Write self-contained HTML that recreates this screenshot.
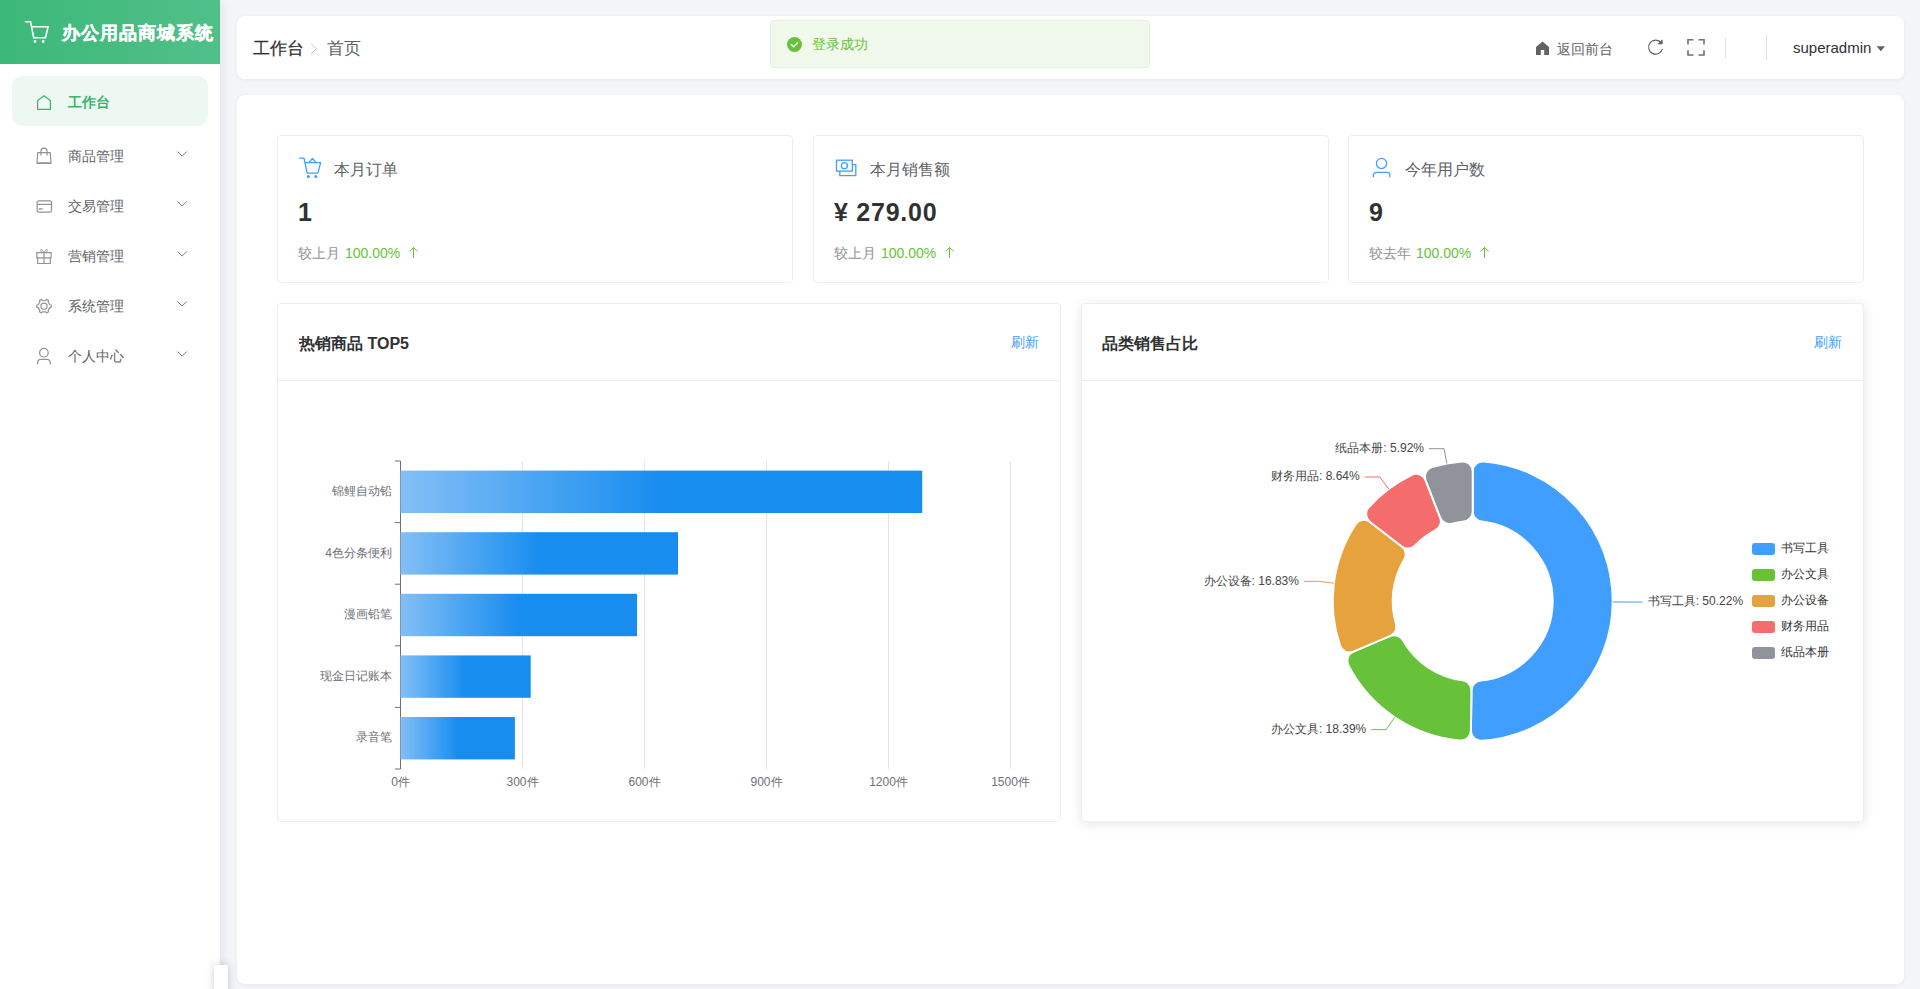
<!DOCTYPE html>
<html><head><meta charset="utf-8">
<style>
*{box-sizing:border-box;margin:0;padding:0}
html,body{width:1920px;height:989px;overflow:hidden}
body{font-family:"Liberation Sans",sans-serif;background:#f4f5f9;position:relative;color:#303133}
.abs{position:absolute}
#side{left:0;top:0;width:220px;height:989px;background:#fff;box-shadow:2px 0 10px rgba(0,21,41,0.08);z-index:2}
#logo{left:0;top:0;width:220px;height:64px;background:linear-gradient(90deg,#3cb878,#50c08a)}
#logo .t{left:62px;top:21px;font-size:18px;font-weight:bold;-webkit-text-stroke:0.35px #fff;color:#fff;letter-spacing:1px;white-space:nowrap;line-height:24px}
.mi{left:12px;width:196px;height:50px;border-radius:10px}
.mi.act{background:#eef8f3}
.mi .lbl{position:absolute;left:56px;top:1px;line-height:50px;font-size:14px;color:#606266;white-space:nowrap}
.mi.act .lbl{color:#3cb371;font-weight:bold}
.mi svg{position:absolute}
.chev{position:absolute;left:165px;top:21px}
.card{background:#fff;border-radius:8px;box-shadow:0 1px 4px rgba(0,0,0,0.05)}
.txt{white-space:nowrap;position:absolute}
.sc{position:absolute;top:135px;width:516px;height:148px;border:1px solid #ebeef5;border-radius:4px;background:#fff}
.sc .ttl{left:56px;top:23px;font-size:16px;line-height:22px;color:#606266}
.sc .val{left:20px;top:61px;font-size:25px;line-height:30px;font-weight:bold;color:#303133;letter-spacing:0.75px}
.sc .cmp{left:20px;top:108px;font-size:14px;line-height:18px;color:#909399}
.sc .pct{left:67px;top:108px;font-size:14px;line-height:18px;color:#67c23a}
.sc .arr{left:130px;top:110px}
.sc svg{position:absolute}
.cc{position:absolute;top:303px;width:784px;height:519px;border:1px solid #ebeef5;border-radius:4px;background:#fff}
.cc .hd{position:absolute;left:0;top:0;width:100%;height:77px;border-bottom:1px solid #ebeef5}
.cc .ttl{left:21px;top:29px;font-size:16px;line-height:22px;font-weight:bold;color:#303133}
.cc .rf{right:21px;top:29px;font-size:14px;line-height:18px;color:#409eff}
svg text{font-family:"Liberation Sans",sans-serif}
.bl{font-size:12px;fill:#6e7079}
.pl{font-size:12px;fill:#464646}
.lg{font-size:12px;fill:#333}
</style></head><body>
<div id="side" class="abs">
  <div id="logo" class="abs">
    <svg class="abs" style="left:22px;top:16px" width="30" height="30" viewBox="0 0 30 30" fill="none" stroke="#fff" stroke-width="1.6" stroke-linejoin="miter" stroke-linecap="round">
      <path d="M3.5 5.8H8.6L11.7 21.8H23.5L26.1 10.8H10"/>
      <circle cx="13" cy="25.5" r="1.4" fill="#fff" stroke="none"/>
      <circle cx="21.2" cy="25.5" r="1.4" fill="#fff" stroke="none"/>
    </svg>
    <div class="abs t">办公用品商城系统</div>
  </div>
  <div class="abs mi act" style="top:76px">
    <svg style="left:25px;top:19px" width="14" height="15" viewBox="0 0 14 15" fill="none" stroke="#3cb371" stroke-width="1.2"><path d="M0.6 14.4V5.6L7 0.8l6.4 4.8v8.8z"/></svg>
    <div class="lbl">工作台</div>
  </div>
  <div class="abs mi" style="top:130px">
    <svg style="left:24px;top:17px" width="16" height="17" viewBox="0 0 16 17" fill="none" stroke="#909399" stroke-width="1.2" stroke-linejoin="round"><path d="M1.7 5.7H14.3L15 16.2H1z"/><path d="M1 16.2H15" stroke-width="1.6"/><path d="M4.9 8.6V4.2a3.05 3.05 0 0 1 6.1 0V8.6"/></svg>
    <div class="lbl">商品管理</div>
    <svg class="chev" width="11" height="7" viewBox="0 0 11 7" fill="none" stroke="#6b6e75" stroke-width="0.9"><path d="M0.5 0.5l4.6 4.6 4.6-4.6"/></svg>
  </div>
  <div class="abs mi" style="top:180px">
    <svg style="left:24px;top:19px" width="17" height="15" viewBox="0 0 17 15" fill="none" stroke="#909399" stroke-width="1.2"><rect x="1.1" y="1.8" width="14.4" height="11.4" rx="1.8"/><path d="M1.1 5.4h14.4"/><path d="M2.6 9.9h4" stroke-width="1.4"/></svg>
    <div class="lbl">交易管理</div>
    <svg class="chev" width="11" height="7" viewBox="0 0 11 7" fill="none" stroke="#6b6e75" stroke-width="0.9"><path d="M0.5 0.5l4.6 4.6 4.6-4.6"/></svg>
  </div>
  <div class="abs mi" style="top:230px">
    <svg style="left:24px;top:17px" width="16" height="17" viewBox="0 0 16 17" fill="none" stroke="#909399" stroke-width="1.2"><path d="M0.9 5.6H15.1V10.8H0.9Z"/><path d="M1.7 10.8V16.6H14.3V10.8M8 5.6V16.6"/><path d="M8 5.6C6.5 3 4.7 1.4 4.7 3.3 4.7 4.7 6 5.6 8 5.6 10 5.6 11.3 4.7 11.3 3.3 11.3 1.4 9.5 3 8 5.6" stroke-width="1"/></svg>
    <div class="lbl">营销管理</div>
    <svg class="chev" width="11" height="7" viewBox="0 0 11 7" fill="none" stroke="#6b6e75" stroke-width="0.9"><path d="M0.5 0.5l4.6 4.6 4.6-4.6"/></svg>
  </div>
  <div class="abs mi" style="top:280px">
    <svg style="left:24px;top:17px" width="17" height="18" viewBox="0 0 17 18" fill="none" stroke="#909399" stroke-width="1.2" stroke-linejoin="round"><g transform="translate(-0.5 0)"><path d="M10.13 3.48 L11.12 2.33 L13.09 3.48 L12.60 4.91 L14.22 7.72 L15.71 8.01 L15.71 10.29 L14.22 10.58 L12.60 13.39 L13.09 14.82 L11.12 15.97 L10.13 14.82 L6.87 14.82 L5.88 15.97 L3.91 14.82 L4.40 13.39 L2.78 10.58 L1.29 10.29 L1.29 8.01 L2.78 7.72 L4.40 4.91 L3.91 3.48 L5.88 2.33 L6.87 3.48Z"/><circle cx="8.5" cy="9.15" r="3.1"/></g></svg>
    <div class="lbl">系统管理</div>
    <svg class="chev" width="11" height="7" viewBox="0 0 11 7" fill="none" stroke="#6b6e75" stroke-width="0.9"><path d="M0.5 0.5l4.6 4.6 4.6-4.6"/></svg>
  </div>
  <div class="abs mi" style="top:330px">
    <svg style="left:24px;top:17px" width="16" height="18" viewBox="0 0 16 18" fill="none" stroke="#909399" stroke-width="1.2"><circle cx="7.9" cy="5.7" r="4.3"/><path d="M1.6 17.2V15.4a3 3 0 0 1 3-3H11.2a3 3 0 0 1 3 3V17.2"/></svg>
    <div class="lbl">个人中心</div>
    <svg class="chev" width="11" height="7" viewBox="0 0 11 7" fill="none" stroke="#6b6e75" stroke-width="0.9"><path d="M0.5 0.5l4.6 4.6 4.6-4.6"/></svg>
  </div>
  <div class="abs" style="left:214px;top:965px;width:14px;height:30px;background:#fff;box-shadow:0 0 8px rgba(0,0,0,0.2)"></div>
</div>

<div id="hdr" class="abs card" style="left:237px;top:16px;width:1667px;height:63px">
  <div class="txt" style="left:16px;top:21px;font-size:17px;line-height:24px;color:#303133;-webkit-text-stroke:0.25px #303133">工作台</div>
  <svg class="abs" style="left:73px;top:27px" width="8" height="12" viewBox="0 0 8 12" fill="none" stroke="#c0c4cc" stroke-width="1"><path d="M1.2 0.6l5 5.2-5 5.2"/></svg>
  <div class="txt" style="left:90px;top:21px;font-size:17px;line-height:24px;color:#606266">首页</div>

  <div class="abs" style="left:533px;top:4px;width:380px;height:48px;background:#f0f9eb;border:1px solid #e1f3d8;border-radius:4px">
    <svg class="abs" style="left:16px;top:16px" width="15" height="15" viewBox="0 0 15 15"><circle cx="7.5" cy="7.5" r="7.5" fill="#67c23a"/><path d="M4.4 7.6l2.2 2.1 4-4" fill="none" stroke="#fff" stroke-width="1.5" stroke-linecap="round" stroke-linejoin="round"/></svg>
    <div class="txt" style="left:41px;top:14px;font-size:14px;line-height:18px;color:#67c23a">登录成功</div>
  </div>

  <svg class="abs" style="left:1298px;top:25px" width="15" height="14" viewBox="0 0 15 14"><path d="M7.5 0.5L14 6v8H9.2V9H5.8v5H1V6z" fill="#606266"/></svg>
  <div class="txt" style="left:1320px;top:24px;font-size:14px;line-height:18px;color:#606266">返回前台</div>
  <svg class="abs" style="left:1410px;top:22px" width="18" height="18" viewBox="0 0 18 18" fill="none" stroke="#606266" stroke-width="1.2"><path d="M15.4 10.8A7 7 0 1 1 14.2 4.9"/><path d="M15.2 1.9V5.9H11.3z" fill="#606266" stroke-width="0.8" stroke-linejoin="miter"/></svg>
  <svg class="abs" style="left:1450px;top:22px" width="18" height="18" viewBox="0 0 18 18" fill="none" stroke="#707275" stroke-width="1.6"><path d="M1 6.6V1.8h5.5M11.5 1.8H17v4.8M17 12.2v4.8h-5.5M6.5 17H1v-4.8"/></svg>
  <div class="abs" style="left:1488px;top:22px;width:1px;height:20px;background:#dcdfe6"></div>
  <div class="abs" style="left:1529px;top:19px;width:1px;height:25px;background:#dcdfe6"></div>
  <div class="txt" style="left:1556px;top:23px;font-size:15px;line-height:18px;color:#303133">superadmin</div>
  <svg class="abs" style="left:1639px;top:30px" width="10" height="7" viewBox="0 0 10 7"><path d="M0.6 0.2h8.4L4.8 5.2z" fill="#606266"/></svg>
</div>

<div id="main" class="abs card" style="left:237px;top:95px;width:1667px;height:889px"></div>

<div class="sc" style="left:277px">
  <svg style="left:20px;top:20px" width="26" height="24" viewBox="0 0 26 24" fill="none" stroke="#409eff" stroke-width="1.3" stroke-linejoin="round" stroke-linecap="round"><path d="M1.6 2.1H6L9.2 17.2H20L22.6 6.6H6.9"/><path d="M10.8 6.6L14.5 2.5L18 6.6"/><circle cx="10.4" cy="20.5" r="0.9" fill="#409eff"/><circle cx="17.8" cy="20.5" r="0.9" fill="#409eff"/></svg>
  <div class="txt ttl">本月订单</div>
  <div class="txt val">1</div>
  <div class="txt cmp">较上月</div><div class="txt pct">100.00%</div><svg class="abs arr" width="11" height="13" viewBox="0 0 11 13" fill="none" stroke="#67c23a" stroke-width="1"><path d="M5.5 12V1.4M1.4 5.5L5.5 1.4l4.1 4.1"/></svg>
</div>
<div class="sc" style="left:813px">
  <svg style="left:20px;top:22px" width="24" height="22" viewBox="0 0 24 22" fill="none" stroke="#409eff" stroke-width="1.3"><rect x="2.5" y="2.2" width="15.8" height="10.9"/><circle cx="10.4" cy="7.7" r="3"/><path d="M18.3 6.7H21.8V17.7H5.8V13.1"/></svg>
  <div class="txt ttl">本月销售额</div>
  <div class="txt val">¥ 279.00</div>
  <div class="txt cmp">较上月</div><div class="txt pct">100.00%</div><svg class="abs arr" width="11" height="13" viewBox="0 0 11 13" fill="none" stroke="#67c23a" stroke-width="1"><path d="M5.5 12V1.4M1.4 5.5L5.5 1.4l4.1 4.1"/></svg>
</div>
<div class="sc" style="left:1348px">
  <svg style="left:20px;top:20px" width="24" height="24" viewBox="0 0 24 24" fill="none" stroke="#409eff" stroke-width="1.3"><circle cx="12.5" cy="7.45" r="5.1"/><path d="M4.3 21.3V19.4a3 3 0 0 1 3-3H17.8a3 3 0 0 1 3 3v1.9"/></svg>
  <div class="txt ttl">今年用户数</div>
  <div class="txt val">9</div>
  <div class="txt cmp">较去年</div><div class="txt pct">100.00%</div><svg class="abs arr" width="11" height="13" viewBox="0 0 11 13" fill="none" stroke="#67c23a" stroke-width="1"><path d="M5.5 12V1.4M1.4 5.5L5.5 1.4l4.1 4.1"/></svg>
</div>

<div class="cc" style="left:277px">
  <div class="hd"><div class="txt ttl">热销商品 TOP5</div><div class="txt rf">刷新</div></div>
</div>
<div class="cc" style="left:1081px;width:783px;box-shadow:0 2px 12px 0 rgba(0,0,0,0.1)">
  <div class="hd"><div class="txt ttl" style="left:20px">品类销售占比</div><div class="txt rf">刷新</div></div>
</div>

<svg class="abs" style="left:0;top:0" width="1920" height="989" viewBox="0 0 1920 989">
<line x1="522.50" y1="461.0" x2="522.50" y2="769.0" stroke="#e0e6f1" stroke-width="1"/>
<line x1="644.50" y1="461.0" x2="644.50" y2="769.0" stroke="#e0e6f1" stroke-width="1"/>
<line x1="766.50" y1="461.0" x2="766.50" y2="769.0" stroke="#e0e6f1" stroke-width="1"/>
<line x1="888.50" y1="461.0" x2="888.50" y2="769.0" stroke="#e0e6f1" stroke-width="1"/>
<line x1="1010.50" y1="461.0" x2="1010.50" y2="769.0" stroke="#e0e6f1" stroke-width="1"/>
<line x1="400.5" y1="461.0" x2="400.5" y2="769.0" stroke="#6e7079" stroke-width="1"/>
<line x1="395" y1="461.00" x2="400.5" y2="461.00" stroke="#6e7079" stroke-width="1"/>
<line x1="395" y1="522.60" x2="400.5" y2="522.60" stroke="#6e7079" stroke-width="1"/>
<line x1="395" y1="584.20" x2="400.5" y2="584.20" stroke="#6e7079" stroke-width="1"/>
<line x1="395" y1="645.80" x2="400.5" y2="645.80" stroke="#6e7079" stroke-width="1"/>
<line x1="395" y1="707.40" x2="400.5" y2="707.40" stroke="#6e7079" stroke-width="1"/>
<line x1="395" y1="769.00" x2="400.5" y2="769.00" stroke="#6e7079" stroke-width="1"/>
<rect x="400.5" y="470.60" width="521.70" height="42.40" fill="url(#bg0)"/>
<linearGradient id="bg0" gradientUnits="userSpaceOnUse" x1="400.5" y1="0" x2="922.20" y2="0"><stop offset="0" stop-color="#83bff6"/><stop offset="0.5" stop-color="#188df0"/><stop offset="1" stop-color="#188df0"/></linearGradient>
<text x="392" y="495.00" text-anchor="end" class="bl">锦鲤自动铅</text>
<rect x="400.5" y="532.20" width="277.50" height="42.40" fill="url(#bg1)"/>
<linearGradient id="bg1" gradientUnits="userSpaceOnUse" x1="400.5" y1="0" x2="678.00" y2="0"><stop offset="0" stop-color="#83bff6"/><stop offset="0.5" stop-color="#188df0"/><stop offset="1" stop-color="#188df0"/></linearGradient>
<text x="392" y="556.60" text-anchor="end" class="bl">4色分条便利</text>
<rect x="400.5" y="593.80" width="236.50" height="42.40" fill="url(#bg2)"/>
<linearGradient id="bg2" gradientUnits="userSpaceOnUse" x1="400.5" y1="0" x2="637.00" y2="0"><stop offset="0" stop-color="#83bff6"/><stop offset="0.5" stop-color="#188df0"/><stop offset="1" stop-color="#188df0"/></linearGradient>
<text x="392" y="618.20" text-anchor="end" class="bl">漫画铅笔</text>
<rect x="400.5" y="655.40" width="130.20" height="42.40" fill="url(#bg3)"/>
<linearGradient id="bg3" gradientUnits="userSpaceOnUse" x1="400.5" y1="0" x2="530.70" y2="0"><stop offset="0" stop-color="#83bff6"/><stop offset="0.5" stop-color="#188df0"/><stop offset="1" stop-color="#188df0"/></linearGradient>
<text x="392" y="679.80" text-anchor="end" class="bl">现金日记账本</text>
<rect x="400.5" y="717.00" width="114.40" height="42.40" fill="url(#bg4)"/>
<linearGradient id="bg4" gradientUnits="userSpaceOnUse" x1="400.5" y1="0" x2="514.90" y2="0"><stop offset="0" stop-color="#83bff6"/><stop offset="0.5" stop-color="#188df0"/><stop offset="1" stop-color="#188df0"/></linearGradient>
<text x="392" y="741.40" text-anchor="end" class="bl">录音笔</text>
<text x="400.50" y="786" text-anchor="middle" class="bl">0件</text>
<text x="522.50" y="786" text-anchor="middle" class="bl">300件</text>
<text x="644.50" y="786" text-anchor="middle" class="bl">600件</text>
<text x="766.50" y="786" text-anchor="middle" class="bl">900件</text>
<text x="888.50" y="786" text-anchor="middle" class="bl">1200件</text>
<text x="1010.50" y="786" text-anchor="middle" class="bl">1500件</text>
<path d="M1472.70 511.56 L1472.70 471.39 A10.00 10.00 0 0 1 1483.47 461.41 A140.00 140.00 0 0 1 1481.54 740.72 A10.00 10.00 0 0 1 1470.91 730.60 L1471.46 690.43 A10.00 10.00 0 0 1 1480.49 680.62 A80.00 80.00 0 0 0 1481.59 521.50 A10.00 10.00 0 0 1 1472.70 511.56 Z" fill="#409eff" stroke="#fff" stroke-width="2" stroke-linejoin="round"/>
<path d="M1471.46 690.43 L1470.91 730.60 A10.00 10.00 0 0 1 1460.00 740.42 A140.00 140.00 0 0 1 1348.42 665.46 A10.00 10.00 0 0 1 1353.39 651.65 L1390.37 635.95 A10.00 10.00 0 0 1 1402.99 640.25 A80.00 80.00 0 0 0 1462.71 680.37 A10.00 10.00 0 0 1 1471.46 690.43 Z" fill="#67c23a" stroke="#fff" stroke-width="2" stroke-linejoin="round"/>
<path d="M1390.37 635.95 L1353.39 651.65 A10.00 10.00 0 0 1 1340.01 645.64 A140.00 140.00 0 0 1 1355.52 524.40 A10.00 10.00 0 0 1 1369.99 521.94 L1401.82 546.45 A10.00 10.00 0 0 1 1404.27 559.55 A80.00 80.00 0 0 0 1396.04 623.89 A10.00 10.00 0 0 1 1390.37 635.95 Z" fill="#e6a23c" stroke="#fff" stroke-width="2" stroke-linejoin="round"/>
<path d="M1401.82 546.45 L1369.99 521.94 A10.00 10.00 0 0 1 1368.65 507.33 A140.00 140.00 0 0 1 1411.94 474.87 A10.00 10.00 0 0 1 1425.59 480.25 L1440.19 517.67 A10.00 10.00 0 0 1 1435.52 530.16 A80.00 80.00 0 0 0 1415.12 545.46 A10.00 10.00 0 0 1 1401.82 546.45 Z" fill="#f56c6c" stroke="#fff" stroke-width="2" stroke-linejoin="round"/>
<path d="M1440.19 517.67 L1425.59 480.25 A10.00 10.00 0 0 1 1432.00 467.05 A140.00 140.00 0 0 1 1461.93 461.41 A10.00 10.00 0 0 1 1472.70 471.39 L1472.70 511.56 A10.00 10.00 0 0 1 1463.81 521.50 A80.00 80.00 0 0 0 1452.09 523.70 A10.00 10.00 0 0 1 1440.19 517.67 Z" fill="#909399" stroke="#fff" stroke-width="2" stroke-linejoin="round"/>
<polyline points="1612.70,601.97 1627.70,602.07 1642.70,602.07" fill="none" stroke="#409eff" stroke-width="1"/>
<text x="1647.70" y="605.37" text-anchor="start" class="pl">书写工具: 50.22%</text>
<polyline points="1394.63,717.21 1386.26,729.66 1371.26,729.66" fill="none" stroke="#67c23a" stroke-width="1"/>
<text x="1366.26" y="732.96" text-anchor="end" class="pl">办公文具: 18.39%</text>
<polyline points="1333.83,583.24 1318.95,581.33 1303.95,581.33" fill="none" stroke="#e6a23c" stroke-width="1"/>
<text x="1298.95" y="584.63" text-anchor="end" class="pl">办公设备: 16.83%</text>
<polyline points="1388.71,488.99 1379.71,476.99 1364.71,476.99" fill="none" stroke="#f56c6c" stroke-width="1"/>
<text x="1359.71" y="480.29" text-anchor="end" class="pl">财务用品: 8.64%</text>
<polyline points="1446.81,463.41 1444.04,448.67 1429.04,448.67" fill="none" stroke="#909399" stroke-width="1"/>
<text x="1424.04" y="451.97" text-anchor="end" class="pl">纸品本册: 5.92%</text>
<rect x="1752" y="543" width="23" height="12" rx="3" fill="#409eff"/>
<text x="1781" y="552.3" class="lg">书写工具</text>
<rect x="1752" y="569" width="23" height="12" rx="3" fill="#67c23a"/>
<text x="1781" y="578.3" class="lg">办公文具</text>
<rect x="1752" y="595" width="23" height="12" rx="3" fill="#e6a23c"/>
<text x="1781" y="604.3" class="lg">办公设备</text>
<rect x="1752" y="621" width="23" height="12" rx="3" fill="#f56c6c"/>
<text x="1781" y="630.3" class="lg">财务用品</text>
<rect x="1752" y="647" width="23" height="12" rx="3" fill="#909399"/>
<text x="1781" y="656.3" class="lg">纸品本册</text>
</svg>
</body></html>
